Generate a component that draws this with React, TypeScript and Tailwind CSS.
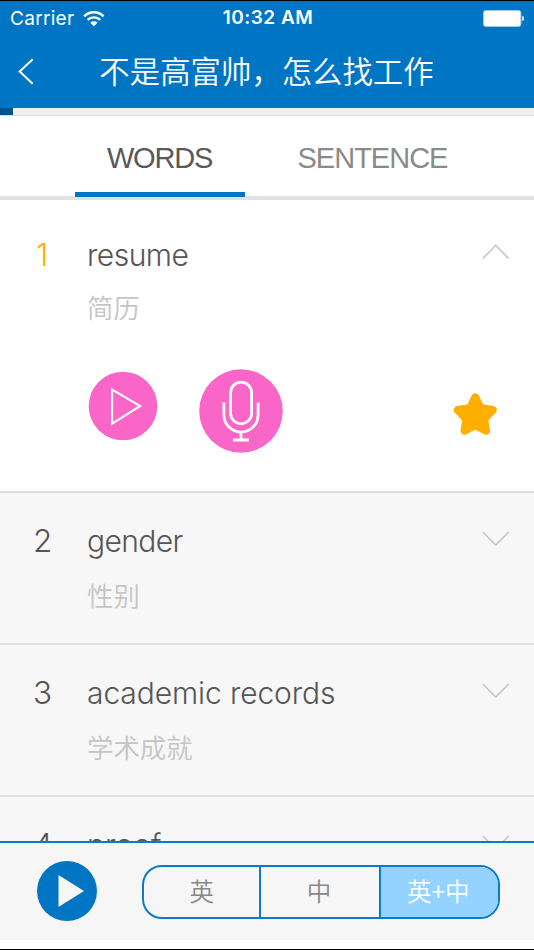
import { useState } from "react";
import clsx from "clsx";

const words = [
  { word: "resume", meaning: "简历", tracking: "tracking-[-0.5px]" },
  { word: "gender", meaning: "性别", tracking: "tracking-[-0.6px]" },
  { word: "academic records", meaning: "学术成就", tracking: "tracking-[-0.1px]" },
  { word: "proof", meaning: "证明", tracking: "tracking-[0px]" },
];

const modes = ["英", "中", "英+中"];

function WifiIcon() {
  return (
    <svg width="22" height="16" viewBox="0 0 22 16" fill="none" stroke="#fff">
      <path d="M1.2 5.3a13.8 13.8 0 0 1 19.4 0" strokeWidth="2.5" />
      <path d="M4.6 8.9a9 9 0 0 1 12.6 0" strokeWidth="2.4" />
      <path d="M10.9 15.3 7.3 11.7a5.2 5.2 0 0 1 7.2 0Z" fill="#fff" stroke="none" />
    </svg>
  );
}

function BatteryIcon() {
  return (
    <svg width="42" height="17" viewBox="0 0 42 17">
      <rect x="0.5" y="0.5" width="37.4" height="16" rx="2.5" fill="#fff" stroke="#9dcdf0" />
      <path d="M39.3 5.8c2.3.7 2.3 4.8 0 5.5Z" fill="#fff" />
    </svg>
  );
}

function Chevron({ up }: { up?: boolean }) {
  return (
    <svg
      className={clsx("absolute right-6", up ? "top-[43px]" : "top-[37px]")}
      width="28"
      height="18"
      viewBox="0 0 28 18"
      fill="none"
      stroke="#c8c8c8"
      strokeWidth="1.6"
    >
      <path d={up ? "M.8 15.6 13.7 2.5l13 13.1" : "M.8 2 13.7 15.1 26.7 2"} />
    </svg>
  );
}

function WordActions() {
  return (
    <div className="flex pl-[88px] pt-[43px]">
      <button className="mt-[2px] size-[70px]">
        <svg viewBox="0 0 70 70" fill="none">
          <circle cx="35" cy="35" r="34.3" fill="#f966c8" />
          <path d="M24.1 18.5v34.2L52.2 35Z" stroke="#fff" strokeWidth="2.1" />
        </svg>
      </button>
      <button className="ml-[41px] size-[84px]">
        <svg viewBox="0 0 84 84" fill="none" stroke="#fff" strokeWidth="2.8">
          <circle cx="42" cy="42" r="41.8" fill="#f966c8" stroke="none" />
          <rect x="31.6" y="13.1" width="21" height="41.6" rx="10.5" />
          <path d="M24.9 33.5V46a17.1 17.1 0 0 0 34.2 0V33.5M42 63v8.5M34 71H50" />
        </svg>
      </button>
      <svg className="ml-[170px] mt-[24px]" width="44" height="44" viewBox="0 0 44 44">
        <path
          d="M22.3 4.3 27.5 15 39.8 17 31.2 26 33 37.7 22.3 32.3 11.6 37.7 13.4 26 4.8 17 17 15Z"
          fill="#ffaf00"
          stroke="#ffaf00"
          strokeWidth="8"
          strokeLinejoin="round"
        />
      </svg>
    </div>
  );
}

export default function App() {
  const [open, setOpen] = useState(0);
  const [mode, setMode] = useState(2);

  return (
    <div className="flex h-[950px] w-[534px] flex-col overflow-hidden border-y border-black bg-white font-['Liberation_Sans','Noto_Sans_CJK_SC',sans-serif]">
      <header className="h-[107px] shrink-0 bg-[#0075c4] text-white">
        <div className="grid h-[35px] grid-cols-3 items-center pl-[10px] pr-[9px] font-['Inter',sans-serif]">
          <div className="flex items-center gap-[9px] pt-px text-[19px] tracking-[0.3px]">
            Carrier
            <WifiIcon />
          </div>
          <div className="pl-px text-center text-[19px] font-semibold tracking-[0.5px]">10:32 AM</div>
          <div className="flex justify-end">
            <BatteryIcon />
          </div>
        </div>
        <div className="relative flex h-[72px] items-center justify-center">
          <svg className="absolute left-[18px] top-[22px]" width="17" height="27" viewBox="0 0 17 27" fill="none" stroke="#fff" strokeWidth="2">
            <path d="M14.7 1.3 1.7 13.6 14.7 25.8" />
          </svg>
          <h1 className="-mt-[5px] pr-px font-['Noto_Sans_CJK_SC',sans-serif] text-[30.4px] font-[350] leading-[72px]">不是高富帅，怎么找工作</h1>
        </div>
      </header>

      <div className="h-2 shrink-0 border-b border-[#dcdcdc] bg-[#eee]">
        <div className="h-[7px] w-[13px] bg-[#00528b]" />
      </div>

      <nav className="flex h-[84px] shrink-0 border-b-4 border-[#e2e2e2] pl-[75px] text-[29px] leading-[84px]">
        <div className="-mb-px h-[81px] w-[170px] border-b-[5px] border-[#0075c4] pr-px text-center tracking-[-1.2px] text-[#595959]">WORDS</div>
        <div className="w-[255px] text-center tracking-[-1px] text-[#8a8a8a]">SENTENCE</div>
      </nav>

      <main className="min-h-0 flex-1 overflow-hidden">
        {words.map(({ word, meaning, tracking }, i) => (
          <section
            key={word}
            onClick={() => setOpen(i)}
            className={clsx(
              "relative",
              i === open ? "h-[291px] bg-white pt-px" : "h-[152px] border-t-2 border-[#dedede] bg-[#f7f7f7]",
            )}
          >
            <div className={clsx("flex", i === open ? "pt-[34px]" : "pt-[28px]")}>
              <div className={clsx("w-[87px] font-['Inter',sans-serif] text-[31.5px] font-[350] leading-10", i === open ? "pl-[36px] text-[#ffaf00]" : "pl-[33px] text-[#555]")}>
                {i + 1}
              </div>
              <div>
                <div className={clsx("font-['Inter',sans-serif] text-[30px] font-[350] leading-10 text-[#555]", tracking)}>{word}</div>
                <div className={clsx("font-['Noto_Sans_CJK_SC',sans-serif] text-[26.4px] font-[350] leading-[38px] text-[#c5c5c5]", i === open ? "mt-[13px]" : "mt-[15px]")}>
                  {meaning}
                </div>
              </div>
            </div>
            <Chevron up={i === open} />
            {i === open && <WordActions />}
          </section>
        ))}
      </main>

      <footer className="flex h-[99px] shrink-0 items-center border-t-2 border-[#0b7bc8] bg-[#f6f6f6] pl-[37px]">
        <button className="-mt-px size-[60px]">
          <svg viewBox="0 0 60 60">
            <circle cx="30" cy="30" r="30" fill="#0075c4" />
            <path d="M21.5 14v32L47 30Z" fill="#f6f6f6" />
          </svg>
        </button>
        <div className="ml-[45px] mt-px flex h-[54px] w-[358px] overflow-hidden rounded-[20px] border-2 border-[#0b7bc8] font-['Noto_Sans_CJK_SC',sans-serif] text-[24.5px] font-[350] leading-[36px]">
          {modes.map((label, i) => (
            <button
              key={label}
              onClick={() => setMode(i)}
              className={clsx(
                "flex-1 border-[#0b7bc8] pb-0.5",
                i > 0 && "border-l-2 pr-0.5",
                i === mode ? "bg-[#94d3ff] text-white" : "text-[#888]",
              )}
            >
              {label}
            </button>
          ))}
        </div>
      </footer>
      <div className="h-[9px] shrink-0 bg-white" />
    </div>
  );
}
